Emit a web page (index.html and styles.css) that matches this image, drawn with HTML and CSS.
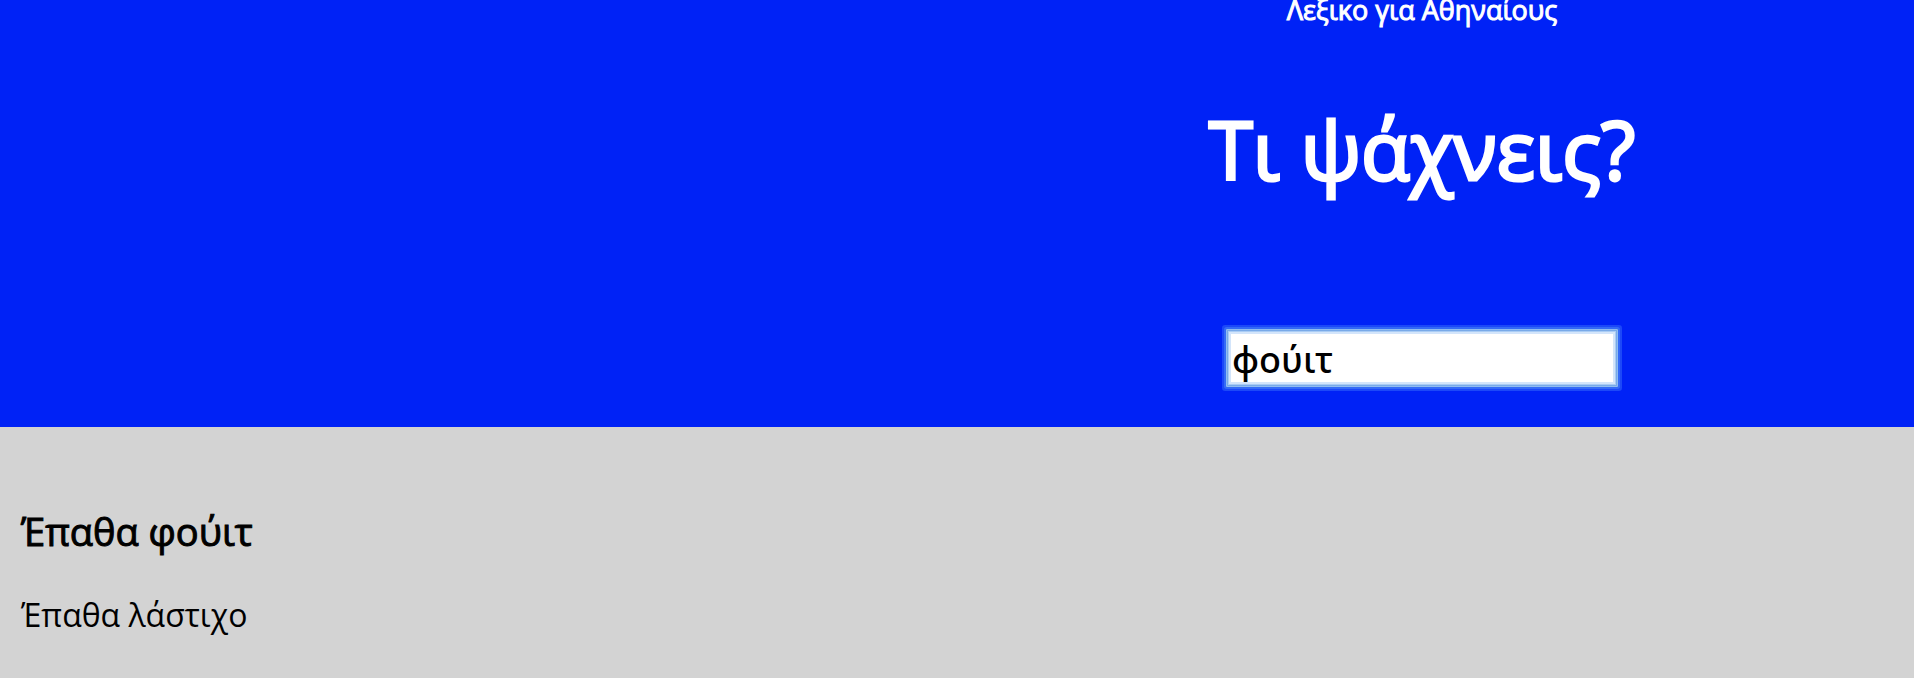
FILE: index.html
```html
<!DOCTYPE html>
<html lang="el">
<head>
<meta charset="utf-8">
<title>Λεξικο για Αθηναίους</title>
<link rel="stylesheet" href="styles.css">
</head>
<body>
<header class="search">
<p class="tagline">Λεξικο για Αθηναίους</p>
<h1 class="title"><label for="query">Τι ψάχνεις?</label></h1>
<input class="query" id="query" type="text" value="φούιτ">
</header>
<main class="results">
<h2 class="term">Έπαθα φούιτ</h2>
<p class="meaning">Έπαθα λάστιχο</p>
</main>
</body>
</html>
```
FILE: styles.css
```css
body {
  margin: 0;
  min-height: 100vh;
  overflow: hidden;
  background: #d3d3d3;
  color: #000;
  font-family: "Open Sans", "Noto Sans", sans-serif;
}

.search {
  display: flex;
  flex-direction: column;
  align-items: center;
  padding: 0 0 40px 930px;
  background: #0022f6;
  color: #fff;
}

.tagline {
  margin: -8px 0 0;
  font-size: 27px;
  line-height: 36px;
  font-weight: 400;
  -webkit-text-stroke: 1px #fff;
}

.title {
  margin: 61px 0 120px;
  font-size: 80px;
  line-height: 120px;
  font-weight: 400;
  -webkit-text-stroke: 3px #fff;
}

.query {
  box-sizing: border-box;
  width: 392px;
  height: 58px;
  padding: 3px 5px 0;
  border: 1px solid #8fbcf0;
  outline: none;
  box-shadow: 0 0 0 2px #346af6, 0 0 0 4px #1c48f8, inset 0 0 0 1px #78a9e8, inset 0 0 0 2px #a9ccf5, inset 0 0 0 4px #d3e5fb;
  border-radius: 1px;
  background: #fff;
  color: #000;
  font: 500 36px "Noto Sans", sans-serif;
}

.results {
  padding: 78px 21px 32px;
}

.term {
  margin: 0 0 36px;
  font-size: 38px;
  line-height: 52px;
  font-weight: 400;
  -webkit-text-stroke: 1px #000;
}

.meaning {
  margin: 0;
  font-size: 32px;
  line-height: 44px;
}
```
